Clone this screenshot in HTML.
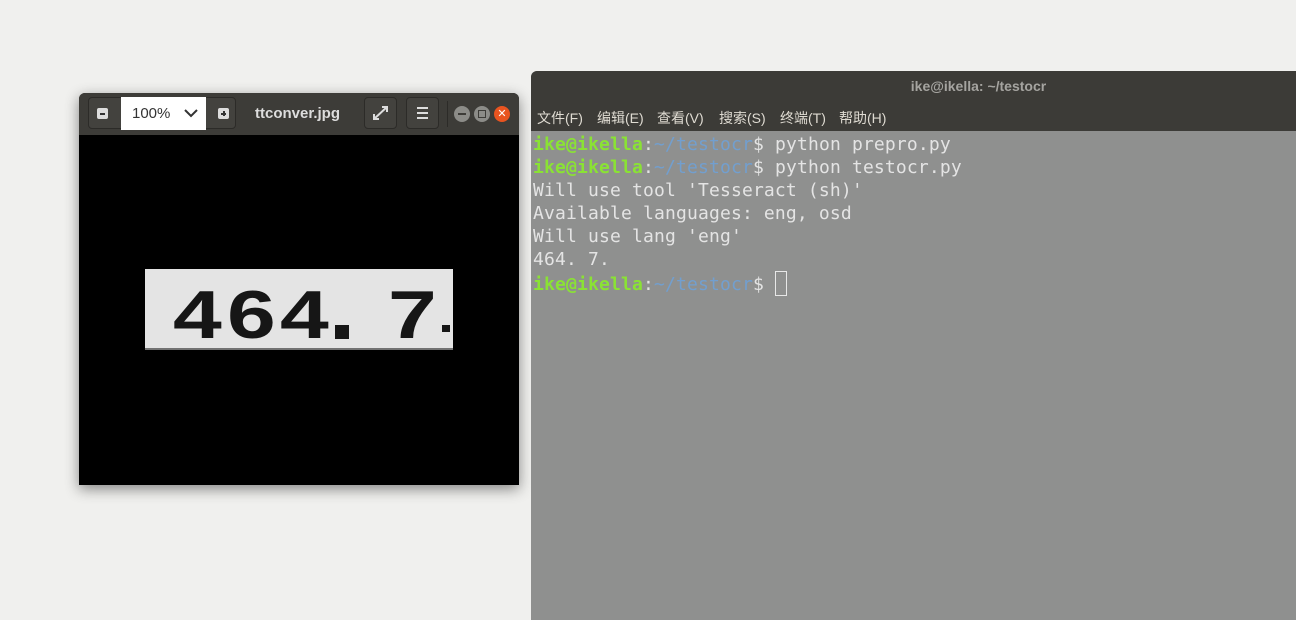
<!DOCTYPE html>
<html><head><meta charset="utf-8"><style>
body{margin:0;width:1296px;height:620px;background:#f0f0ee;position:relative;overflow:hidden;font-family:"Liberation Sans","Noto Sans CJK SC",sans-serif}
.iv{position:absolute;left:79px;top:93px;width:440px;height:392px;background:#000;border-radius:6px 6px 0 0;box-shadow:0 4px 14px rgba(0,0,0,.45);overflow:hidden}
.ivh{position:absolute;left:0;top:0;width:440px;height:42px;background:#3d3c38}
.btn{position:absolute;top:4px;height:32px;border:1px solid #2c2b28;border-radius:4px;background:#43423e;box-sizing:border-box}
.sq{position:absolute;width:11px;height:11px;background:#ddd;border-radius:2px}
.term{position:absolute;left:531px;top:71px;width:765px;height:549px;background:#8f908f;border-radius:6px 0 0 0;overflow:hidden}
.th{position:absolute;left:0;top:0;width:765px;height:60px;background:#3c3b37}
.mono{font-family:"DejaVu Sans Mono",monospace;font-size:18px;line-height:23px;letter-spacing:0.16px;color:#e4e4e4;white-space:pre;position:absolute;left:2px;top:62px}
.g{color:#8ae234;font-weight:bold}.b{color:#729fcf}
.d{position:absolute;top:12px;font-weight:bold;font-size:68px;line-height:68px;color:#161616;transform:scaleX(1.29);transform-origin:left}
.m{position:absolute;top:37px;font-size:14px;color:#dfdbd2}
</style></head><body>
<div class="iv">
 <div class="ivh">
  <div class="btn" style="left:9px;width:148px"></div>
  <div class="sq" style="left:18px;top:15px"><div style="position:absolute;left:3px;top:5px;width:5px;height:1.5px;background:#333"></div></div>
  <div style="position:absolute;left:42px;top:4px;width:85px;height:33px;background:#fff;font-size:15px;color:#333;line-height:33px;padding-left:11px;box-sizing:border-box">100%<svg style="position:absolute;left:63px;top:12px" width="14" height="9"><path d="M1 1l6 6 6-6" stroke="#333" stroke-width="2" fill="none"/></svg></div>
  <div class="sq" style="left:139px;top:15px"><div style="position:absolute;left:3px;top:5px;width:5px;height:1.5px;background:#333"></div><div style="position:absolute;left:5px;top:3px;width:1.5px;height:5px;background:#333"></div></div>
  <div style="position:absolute;left:176px;top:12px;color:#ddd;font-weight:bold;font-size:15px">ttconver.jpg</div>
  <div class="btn" style="left:285px;width:33px"><svg width="31" height="30"><path d="M9 21l13-12M17 9h5v5M9 16v5h5" stroke="#ddd" stroke-width="2" fill="none"/></svg></div>
  <div class="btn" style="left:327px;width:33px"><svg width="31" height="30"><path d="M10 10h11M10 15h11M10 20h11" stroke="#ddd" stroke-width="2"/></svg></div>
  <div style="position:absolute;left:368px;top:8px;width:1px;height:26px;background:#2c2b28"></div>
  <div style="position:absolute;left:375px;top:13px;width:16px;height:16px;border-radius:50%;background:#8c8c88"><div style="position:absolute;left:4px;top:7px;width:8px;height:1.5px;background:#3d3c38"></div></div>
  <div style="position:absolute;left:395px;top:13px;width:16px;height:16px;border-radius:50%;background:#8c8c88"><div style="position:absolute;left:4px;top:4px;width:8px;height:8px;border:1px solid #3d3c38;box-sizing:border-box"></div></div>
  <div style="position:absolute;left:415px;top:13px;width:16px;height:16px;border-radius:50%;background:#e95420;color:#fff;font-size:11px;text-align:center;line-height:16px">✕</div>
 </div>
 <div style="position:absolute;left:66px;top:176px;width:308px;height:81px;background:#e4e4e4;overflow:hidden">
  <div class="d" style="left:28px">4</div>
  <div class="d" style="left:82px">6</div>
  <div class="d" style="left:135px">4</div>
  <div style="position:absolute;left:190px;top:56px;width:14px;height:14px;background:#161616"></div>
  <div class="d" style="left:243px">7</div>
  <div style="position:absolute;left:297px;top:56px;width:8px;height:7px;background:#161616"></div>
  <div style="position:absolute;left:0;top:79px;width:308px;height:2px;background:#000;opacity:.5"></div>
 </div>
</div>
<div class="term">
 <div class="th">
  <div style="position:absolute;left:0;width:895px;top:7px;text-align:center;color:#a5a4a0;font-size:14px;font-weight:bold">ike@ikella: ~/testocr</div>
  <div class="m" style="left:6px">文件(F)</div>
  <div class="m" style="left:66px">编辑(E)</div>
  <div class="m" style="left:126px">查看(V)</div>
  <div class="m" style="left:188px">搜索(S)</div>
  <div class="m" style="left:249px">终端(T)</div>
  <div class="m" style="left:308px">帮助(H)</div>
 </div>
 <div class="mono"><span class="g">ike@ikella</span>:<span class="b">~/testocr</span>$ python prepro.py
<span class="g">ike@ikella</span>:<span class="b">~/testocr</span>$ python testocr.py
Will use tool 'Tesseract (sh)'
Available languages: eng, osd
Will use lang 'eng'
464. 7.
<span class="g">ike@ikella</span>:<span class="b">~/testocr</span>$ <span style="display:inline-block;width:12px;height:25px;border:1px solid #e8e8e8;vertical-align:-6px;box-sizing:border-box"></span></div>
</div>
</body></html>
